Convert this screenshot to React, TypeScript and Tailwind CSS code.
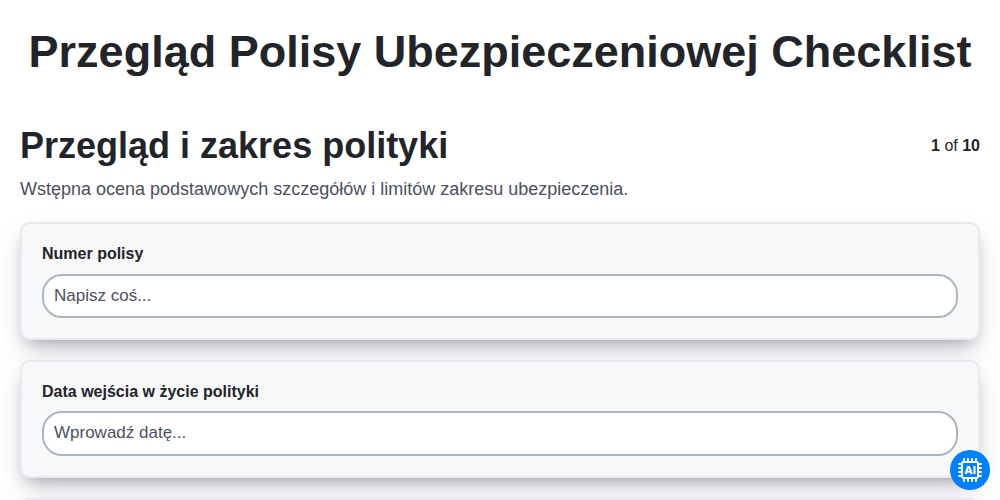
interface ChecklistField {
  id: string;
  label: string;
  placeholder: string;
}

const FIELDS: ChecklistField[] = [
  { id: "policy-number", label: "Numer polisy", placeholder: "Napisz coś..." },
  { id: "effective-date", label: "Data wejścia w życie polityki", placeholder: "Wprowadź datę..." },
];

const CARD_CLASSES =
  "shrink-0 rounded-[10px] border-2 border-[#e9eaf0] bg-[#f7f8fa] shadow-[0_13px_27px_-5px_rgba(50,50,93,0.25),0_8px_16px_-8px_rgba(0,0,0,0.3)]";

function FieldCard({ field }: { field: ChecklistField }) {
  return (
    <div className={`h-[117.7px] p-5 ${CARD_CLASSES}`}>
      <label
        htmlFor={field.id}
        className="mb-[10px] block text-base leading-[19.4px] font-bold text-[#212529]"
      >
        {field.label}
      </label>
      <input
        id={field.id}
        type="text"
        placeholder={field.placeholder}
        className="block h-[44.3px] w-full rounded-[20px] border-2 border-[#adb5bd] bg-white px-[10px] pb-[0.4px] text-[17px] text-[#212529] placeholder:text-[#4a5160]"
      />
    </div>
  );
}

function AiChipIcon() {
  return (
    <svg viewBox="0 0 24 24" className="size-6" fill="none" stroke="currentColor">
      {/* Pins */}
      <path
        d="M6 1v3M10 1v3M14 1v3M18 1v3M6 20v3M10 20v3M14 20v3M18 20v3M1 6h3M1 10h3M1 14h3M1 18h3M20 6h3M20 10h3M20 14h3M20 18h3"
        strokeWidth="2"
        strokeLinecap="round"
      />
      <rect x="4" y="4" width="16" height="16" rx="1.5" strokeWidth="1.9" />
      <text
        x="12"
        y="16"
        textAnchor="middle"
        fontSize="11"
        fontWeight="800"
        fill="currentColor"
        stroke="none"
        className="font-['Inter',sans-serif]"
      >
        AI
      </text>
    </svg>
  );
}

export default function App() {
  return (
    <div className="h-[500px] overflow-hidden bg-white px-5 font-['Liberation_Sans',Arial,sans-serif] text-[#212529]">
      <h1 className="pt-[25px] text-center text-[45px] leading-[54px] font-bold whitespace-nowrap">
        Przegląd Polisy Ubezpieczeniowej Checklist
      </h1>

      <div className="mt-[45px] flex items-center justify-between">
        <h2 className="text-[36px] leading-[43px] font-bold">Przegląd i zakres polityki</h2>
        <span className="text-base">
          <b>1</b> of <b>10</b>
        </span>
      </div>
      <p className="mt-[9px] text-[18px] leading-[27px] text-[#4a5160]">
        Wstępna ocena podstawowych szczegółów i limitów zakresu ubezpieczenia.
      </p>

      <div className="mt-[19.3px] flex flex-col gap-5">
        {FIELDS.map((field) => (
          <FieldCard key={field.id} field={field} />
        ))}
        {/* Next question, below the fold */}
        <div className={`h-[117.7px] ${CARD_CLASSES}`} />
      </div>

      {/* Assistant launcher */}
      <button
        type="button"
        aria-label="AI"
        className="fixed right-[10px] bottom-[10px] flex size-10 items-center justify-center rounded-full bg-[#0080ff] text-white"
      >
        <AiChipIcon />
      </button>
    </div>
  );
}
